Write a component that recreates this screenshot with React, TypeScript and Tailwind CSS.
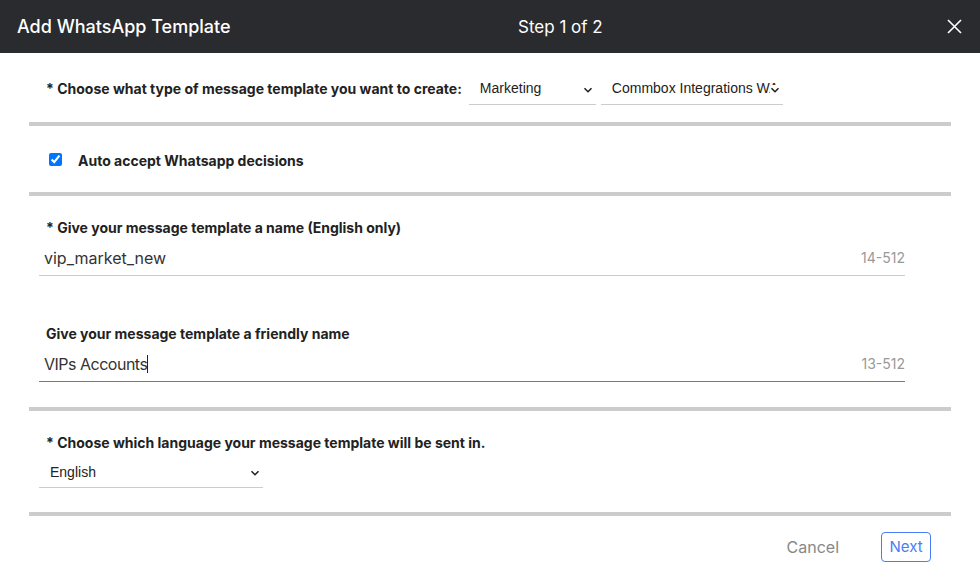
import React from "react";

const ChevronDown: React.FC = () => (
  <svg width="10" height="10" viewBox="0 0 10 10" className="text-[#222]">
    <path d="M1.5 3.2 L5 6.7 L8.5 3.2" fill="none" stroke="currentColor" strokeWidth="1.6" />
  </svg>
);

interface SelectProps {
  value: string;
  width: string;
}

const FakeSelect: React.FC<SelectProps> = ({ value, width }) => (
  <div className={`relative h-[31px] ${width} border-b border-[#cccccc] flex items-center`}>
    <div className="pl-[11px] pr-[4px] overflow-hidden whitespace-nowrap text-[14px] text-[#222] [font-family:'Liberation_Sans',sans-serif] w-full">
      {value}
    </div>
    <span className="absolute right-[3px] top-[11px] bg-white">
      <ChevronDown />
    </span>
  </div>
);

const Divider: React.FC = () => <div className="h-[4px] bg-[#cccccc] w-full" />;

const App: React.FC = () => {
  return (
    <div className="w-[980px] h-[579px] bg-white overflow-hidden [font-family:Inter,'Noto_Sans',sans-serif]">
      <div className="h-[53px] bg-[#2a2b2f] flex items-center px-[17px] text-white relative">
        <h1 className="text-[18px] font-medium">Add WhatsApp Template</h1>
        <div className="absolute left-[518px] text-[17px] font-normal top-[15px]">Step 1 of 2</div>
        <button className="ml-auto mr-[1px] text-white">
          <svg width="15" height="15" viewBox="0 0 15 15">
            <path d="M1 1 L14 14 M14 1 L1 14" stroke="currentColor" strokeWidth="1.6" />
          </svg>
        </button>
      </div>

      <div className="pl-[29px] pr-[29px]">
        <div className="h-[69px] flex items-center pl-[17px] pt-[1px]">
          <span className="text-[14px] font-bold text-[#222]">* Choose what type of message template you want to create:</span>
          <div className="ml-[7px] flex gap-[5px] pt-[2px]">
            <FakeSelect value="Marketing" width="w-[127px]" />
            <FakeSelect value="Commbox Integrations WA" width="w-[182px]" />
          </div>
        </div>
        <Divider />

        <div className="h-[66px] flex items-center pl-[20px] pt-[1px]">
          <input type="checkbox" defaultChecked className="w-[13px] h-[13px] accent-[#0075ff]" />
          <span className="ml-[16px] text-[14px] font-bold text-[#222] pt-[2px]">Auto accept Whatsapp decisions</span>
        </div>
        <Divider />

        <div className="h-[211px] pt-[22px]">
          <div className="pl-[17px] text-[14px] leading-[20px] font-bold text-[#222]">* Give your message template a name (English only)</div>
          <div className="ml-[10px] mr-[46px] mt-[2px]">
            <div className="h-[35px] flex items-center pl-[5px] text-[16px] text-[#333]">
              <span>vip_market_new</span>
              <span className="ml-auto text-[14px] text-[#999]">14-512</span>
            </div>
            <div className="h-[1px] bg-[#cccccc]" />
          </div>

          <div className="pl-[17px] mt-[48px] text-[14px] leading-[20px] font-bold text-[#222]">Give your message template a friendly name</div>
          <div className="ml-[10px] mr-[46px] mt-[2px]">
            <div className="h-[35px] flex items-center pl-[5px] text-[16px] text-[#333]">
              <span className="tracking-[-0.5px]">VIPs Accounts</span>
              <span className="w-[1px] h-[18px] bg-[#222]" />
              <span className="ml-auto text-[14px] text-[#999]">13-512</span>
            </div>
            <div className="h-[1px] bg-[#4a7cf7]" />
          </div>
        </div>
        <Divider />

        <div className="h-[101px] pt-[22px]">
          <div className="pl-[17px] text-[14px] leading-[20px] font-bold text-[#222]">* Choose which language your message template will be sent in.</div>
          <div className="ml-[10px] mt-[4px]">
            <FakeSelect value="English" width="w-[224px]" />
          </div>
        </div>
        <Divider />

        <div className="flex items-center justify-end pt-[16px] pr-[20px]">
          <button className="text-[16px] text-[#888] mr-[42px]">Cancel</button>
          <button className="h-[30px] w-[50px] border border-[#4a7cf7] rounded-[4px] text-[15px] text-[#4a7cf7]">Next</button>
        </div>
      </div>
    </div>
  );
};

export default App;
